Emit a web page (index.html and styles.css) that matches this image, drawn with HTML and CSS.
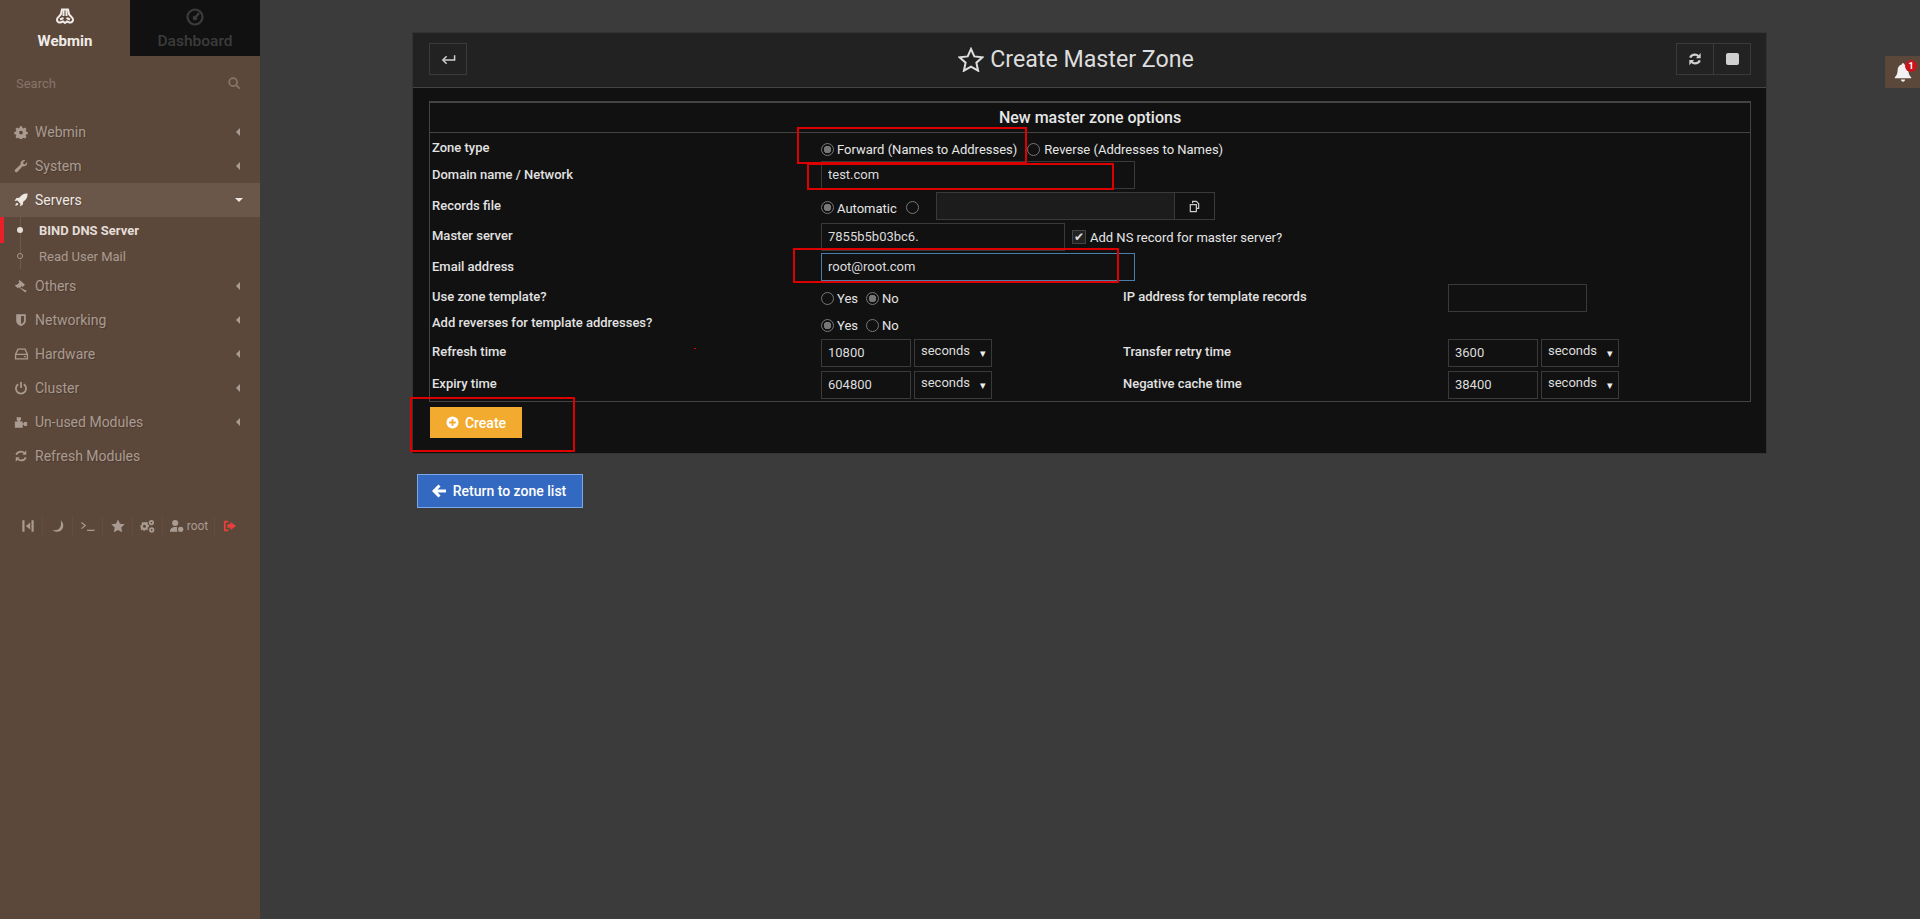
FILE: index.html
```html
<!DOCTYPE html>
<html lang="en">
<head>
<meta charset="utf-8">
<title>Create Master Zone</title>
<link rel="stylesheet" href="styles.css">
</head>
<body>
<aside class="sidebar">
  <div class="tabs">
    <div class="tab tab-active">
      <svg class="tab-icon" viewBox="0 0 20 20" fill="none" stroke="currentColor" stroke-width="2"><path d="M7 2.500h6l1.200 5 3.300 3.500c1.500 2.500-.5 5-3 4.500l-2.500-1-2 1.500-2-1.500-2.500 1c-2.500.5-4.500-2-3-4.500l3.300-3.500z"/><path d="M8.500 3v6M11.500 3v6M5 12.500l3.500-1.500M15 12.500l-3.500-1.500"/></svg>
      <span>Webmin</span>
    </div>
    <div class="tab tab-dark">
      <svg class="tab-icon" viewBox="0 0 20 20" fill="none" stroke="currentColor" stroke-width="2.200"><circle cx="10" cy="10" r="7.500"/><path d="M10 11l4-5"/><circle cx="10" cy="11" r="1.200"/></svg>
      <span>Dashboard</span>
    </div>
  </div>
  <div class="search"><span>Search</span>
    <svg class="ic" viewBox="0 0 16 16" fill="none" stroke="currentColor" stroke-width="2"><circle cx="7" cy="7" r="4.500"/><path d="M10.500 10.500l4 4"/></svg>
  </div>
  <nav class="nav">
    <div class="item"><svg class="ic" viewBox="0 0 16 16" fill="currentColor"><path fill-rule="evenodd" d="M6.700 1.500h2.600l.4 1.900 1.200.5 1.600-1 1.800 1.800-1 1.600.5 1.200 1.900.4v2.600l-1.900.4-.5 1.200 1 1.600-1.800 1.800-1.600-1-1.200.5-.4 1.900H6.700l-.4-1.900-1.200-.5-1.600 1-1.800-1.800 1-1.600-.5-1.200-1.900-.4V7.900l1.900-.4.500-1.200-1-1.600 1.800-1.800 1.600 1 1.200-.5zM8 6.500a2.200 2.200 0 100 4.400 2.200 2.200 0 000-4.400z"/></svg><span class="lbl">Webmin</span><i class="caret"></i></div>
    <div class="item"><svg class="ic" viewBox="0 0 16 16" fill="currentColor"><path d="M15 3.500c.6 2.500-1 5-4 5-.5 0-.9-.1-1.200-.2L4 14.500c-.8.800-2 .8-2.700.1-.7-.8-.6-1.900.1-2.600L7.500 6.200C7 3.200 9.800.5 13 1.200L10.300 4l.5 1.800 1.700.4z"/></svg><span class="lbl">System</span><i class="caret"></i></div>
    <div class="item item-open"><svg class="ic" viewBox="0 0 16 16" fill="currentColor"><path d="M15.500.5c.3 4.500-2 7.500-5 9.500l-.3 3.200L7 15.500l.3-3.300-3.500-3.500L.5 9l2.300-3.200L6 5.500C8 2.500 11 .2 15.500.5zM3.500 11c-1.200.5-2 2-2 3.500 1.500 0 3-.8 3.500-2z"/></svg><span class="lbl">Servers</span><i class="caret caret-down"></i></div>
    <div class="subnav">
      <div class="sub sub-active"><i class="dot"></i><span>BIND DNS Server</span></div>
      <div class="sub"><i class="dot dot-o"></i><span>Read User Mail</span></div>
    </div>
    <div class="item"><svg class="ic" viewBox="0 0 16 16" fill="currentColor"><path d="M6.500 1l6 5.500-2.500 2.700-1.200-1.100L7 10l7.500 3.500-1.500 2L5.500 9.500l-1.300 1.200L1 7.500l1.500-1.300.8.600L6.200 4l-.9-1.200z"/></svg><span class="lbl">Others</span><i class="caret"></i></div>
    <div class="item"><svg class="ic" viewBox="0 0 16 16" fill="currentColor"><path fill-rule="evenodd" d="M2.500 1.500h11v7c0 3.500-3 5.500-5.500 6.500-2.500-1-5.500-3-5.500-6.500zM8 3.500v9.200c1.800-.9 3.500-2.300 3.500-4.200v-5z"/></svg><span class="lbl">Networking</span><i class="caret"></i></div>
    <div class="item"><svg class="ic ic-wide" viewBox="0 0 16 16" fill="none" stroke="currentColor" stroke-width="1.500"><path d="M4 2.500h8l2.800 6v5H1.200v-5zM1.200 8.500h13.600"/><path d="M11 11h2" stroke-width="1.200"/></svg><span class="lbl">Hardware</span><i class="caret"></i></div>
    <div class="item"><svg class="ic" viewBox="0 0 16 16" fill="none" stroke="currentColor" stroke-width="2"><path d="M4.800 3.800a5.800 5.800 0 106.400 0"/><path d="M8 1v7"/></svg><span class="lbl">Cluster</span><i class="caret"></i></div>
    <div class="item"><svg class="ic" viewBox="0 0 16 16" fill="currentColor"><path d="M1 7.500h3V6H3V2.500h5V6H7v1.500h3V9.500h1.500v-1.500h3.500v4.500h-3.500V11H10v3.500H1z"/></svg><span class="lbl">Un-used Modules</span><i class="caret"></i></div>
    <div class="item"><svg class="ic" viewBox="0 0 16 16" fill="none" stroke="currentColor" stroke-width="2"><path d="M2.500 6.500C3.500 4 5.500 3 8 3c1.800 0 3 .8 4 1.800"/><path d="M13.500 9.500C12.500 12 10.500 13 8 13c-1.800 0-3-.8-4-1.800"/><path d="M14 1.500v5H9.500z" fill="currentColor" stroke="none"/><path d="M2 14.500v-5h4.500z" fill="currentColor" stroke="none"/></svg><span class="lbl">Refresh Modules</span></div>
  </nav>
  <div class="foot">
    <span class="fc"><svg class="fi" viewBox="0 0 16 16" fill="currentColor"><path d="M1.500 1.500h2.500v13H1.500zM12 1.500h2.500v13H12zM10.500 4v8L5.500 8z"/></svg></span>
    <span class="fc"><svg class="fi" viewBox="0 0 16 16" fill="currentColor"><path d="M11 1.500c3.500 3 4 7.500 1.500 10.500S5 15.500 1.500 12.500c4 1 7.500 0 9-3 1.200-2.500 1.200-5.500.5-8z"/></svg></span>
    <span class="fc"><svg class="fi fi-w" viewBox="0 0 16 16" fill="none" stroke="currentColor" stroke-width="1.300"><path d="M1 4l4.500 3.500L1 11M7.500 13h8.500"/></svg></span>
    <span class="fc"><svg class="fi" viewBox="0 0 16 16" fill="currentColor"><path d="M8 .5l2.300 5 5.400.6-4 3.700 1.100 5.400L8 12.500l-4.800 2.700 1.100-5.400-4-3.700 5.400-.6z"/></svg></span>
    <span class="fc"><svg class="fi fi-w" viewBox="0 0 16 16" fill="currentColor"><path fill-rule="evenodd" d="M5 3.500l1.300.4.900-.9 1.500 1.500-.7 1 .4 1.100 1.300.3v2.200l-1.300.3-.4 1.100.7 1-1.500 1.500-.9-.9-1.300.4-.3 1.300H3.500l-.3-1.300-1.100-.4-1 .7L0 11.800l.7-1-.4-1.100L0 9.400V7.200l1.300-.3.400-1.100-.7-1L2.500 3.300l1 .7 1.100-.4zM4.500 6.500a1.800 1.800 0 100 3.600 1.800 1.800 0 000-3.600z"/><path fill-rule="evenodd" d="M12.500 1a3 3 0 110 6 3 3 0 010-6zm0 2a1 1 0 100 2 1 1 0 000-2zM12.800 9.500a3 3 0 110 6 3 3 0 010-6zm0 2a1 1 0 100 2 1 1 0 000-2z"/></svg></span>
    <span class="fc fc-user"><svg class="fi fi-w" viewBox="0 0 16 16" fill="currentColor"><circle cx="6.500" cy="4.500" r="3.500"/><path d="M0.500 14.500c0-3.500 2.500-5.500 6-5.500 1 0 1.800.1 2.500.4-.8 1.500-.6 3.500.3 5.100z"/><circle cx="12.800" cy="11.800" r="3"/></svg><span>root</span></span>
    <span class="fc fc-last"><svg class="fi fi-red" viewBox="0 0 16 16" fill="currentColor"><path d="M1 3.500C1 2.500 1.800 2 2.500 2H6v2H3v8h3v2H2.500C1.800 14 1 13.500 1 12.500zM8.500 3.500L15 8l-6.500 4.500V10H5V6h3.500z"/></svg></span>
  </div>
</aside>

<main class="main">
  <section class="panel">
    <header class="panel-head">
      <button class="btn-sq" type="button"><svg class="hd-ic hd-back" viewBox="0 0 16 16" fill="none" stroke="currentColor" stroke-width="1.600"><path d="M14.500 3.500v5H2.500"/><path d="M6 4.500L2 8.500l4 4"/></svg></button>
      <h1 class="title"><svg class="star" viewBox="0 0 26 25" fill="none" stroke="currentColor" stroke-width="2"><path d="M13 2l3.300 7.400 8.200.9-6.100 5.400 1.700 8L13 19.600l-7.100 4.100 1.700-8L1.500 10.300l8.200-.9z"/></svg>Create Master Zone</h1>
      <div class="btn-group">
        <button class="btn-sq" type="button"><svg class="hd-ic" viewBox="0 0 16 16" fill="none" stroke="currentColor" stroke-width="2.600"><path d="M2.500 6.500C3.500 4 5.500 3 8 3c1.800 0 3 .8 4 1.800"/><path d="M13.500 9.500C12.500 12 10.500 13 8 13c-1.800 0-3-.8-4-1.800"/><path d="M14.500 1v6H9z" fill="currentColor" stroke="none"/><path d="M1.500 15V9H7z" fill="currentColor" stroke="none"/></svg></button>
        <button class="btn-sq" type="button"><span class="stop"></span></button>
      </div>
    </header>
    <div class="panel-body">
      <div class="opts">
        <div class="opts-title">New master zone options</div>
        <div class="row h28">
          <label class="k k7">Zone type</label>
          <div class="v v-wide radios pad9"><input type="radio" name="zt" checked><span class="opt-a">Forward (Names to Addresses)</span><input type="radio" name="zt"><span class="opt-r">Reverse (Addresses to Names)</span></div>
        </div>
        <div class="row h31">
          <label class="k">Domain name / Network</label>
          <div class="v v-wide"><input class="inp w314" value="test.com"></div>
        </div>
        <div class="row h31">
          <label class="k">Records file</label>
          <div class="v v-wide radios rec"><input type="radio" name="rf" checked><span class="opt-b">Automatic</span><input type="radio" name="rf">
            <span class="file"><input class="inp file-inp"><span class="file-btn"><svg class="copy" viewBox="0 0 14 14" fill="none" stroke="currentColor" stroke-width="1.300"><path d="M5 3.500V1.500h4l2.500 2.500v5H9"/><rect x="2.500" y="5" width="6.500" height="7.500"/></svg></span></span>
          </div>
        </div>
        <div class="row h30">
          <label class="k k5">Master server</label>
          <div class="v v-wide chk-row"><input class="inp w244" value="7855b5b03bc6."><span class="chk">&#10004;</span><span class="chk-l">Add NS record for master server?</span></div>
        </div>
        <div class="row h30">
          <label class="k">Email address</label>
          <div class="v v-wide"><input class="inp w314 focus" value="root@root.com"></div>
        </div>
        <div class="row h29">
          <label class="k">Use zone template?</label>
          <div class="v radios tiny pad8"><input type="radio" name="ut"><span class="opt-y">Yes</span><input type="radio" name="ut" checked><span>No</span></div>
          <label class="k2">IP address for template records</label>
          <div class="v push"><input class="inp w139"></div>
        </div>
        <div class="row h26">
          <label class="k k3">Add reverses for template addresses?</label>
          <div class="v radios tiny pad6"><input type="radio" name="ar" checked><span class="opt-y">Yes</span><input type="radio" name="ar"><span>No</span></div>
        </div>
        <div class="row h32">
          <label class="k">Refresh time</label>
          <div class="v pair push"><input class="inp w90" value="10800"><div class="sel"><span>seconds</span><i>&#9662;</i></div></div>
          <label class="k2">Transfer retry time</label>
          <div class="v pair push"><input class="inp w90" value="3600"><div class="sel"><span>seconds</span><i>&#9662;</i></div></div>
        </div>
        <div class="row h31">
          <label class="k">Expiry time</label>
          <div class="v pair push"><input class="inp w90" value="604800"><div class="sel"><span>seconds</span><i>&#9662;</i></div></div>
          <label class="k2">Negative cache time</label>
          <div class="v pair push"><input class="inp w90" value="38400"><div class="sel"><span>seconds</span><i>&#9662;</i></div></div>
        </div>
      </div>
      <button class="btn-create" type="button"><svg class="bi" viewBox="0 0 14 14"><circle cx="7" cy="7" r="6.500" fill="currentColor"/><path d="M7 3.500v7M3.500 7h7" stroke="#f3ab2f" stroke-width="2"/></svg>Create</button>
    </div>
  </section>
  <button class="btn-return" type="button"><svg class="bi bi-l" viewBox="0 0 14 14" fill="none" stroke="currentColor" stroke-width="3"><path d="M7.500 1.500L2 7l5.500 5.500M2.500 7H14"/></svg>Return to zone list</button>
</main>

<div class="bell"><svg viewBox="0 0 16 16" fill="currentColor"><path d="M8 1c.6 0 1 .4 1 .9 2.300.5 3.300 2.500 3.300 4.600 0 3 1.200 4.700 2.200 5.500v1H1.500v-1c1-.8 2.200-2.500 2.200-5.500 0-2.100 1-4.100 3.300-4.600 0-.5.400-.9 1-.9z"/><path d="M6.300 14h3.400c0 1-.8 1.700-1.700 1.700S6.300 15 6.300 14z"/></svg><b>1</b></div>

<div class="mark m1"></div>
<div class="mark m2"></div>
<div class="mark m3"></div>
<div class="mark m4"></div>
<div class="speck"></div>
</body>
</html>
```
FILE: styles.css
```css
* { box-sizing: border-box; }
html, body { height: 100%; }
body {
  margin: 0;
  background: #3b3b3b;
  font-family: Roboto, "Liberation Sans", sans-serif;
  font-size: 13px;
  color: #e6e6e6;
  display: flex;
  overflow: hidden;
  position: relative;
}

/* sidebar */
.sidebar { width: 260px; flex: none; background: #5c483b; color: #a99b91; position: relative; }
.tabs { display: flex; height: 56px; }
.tab { width: 130px; display: flex; flex-direction: column; align-items: center; padding-top: 7px; font-size: 15px; font-weight: 500; }
.tab-active { color: #f0ebe7; font-weight: 700; }
.tab-dark { background: #111; color: #3c3c3c; font-size: 15.5px; }
.tab-icon { width: 20px; height: 20px; margin-bottom: 5px; }
.search { display: flex; justify-content: space-between; align-items: center; height: 30px; margin-top: 12px; padding: 0 19px 0 16px; font-size: 13px; color: #85756a; }
.search .ic { margin: 0; color: #85756a; }
.nav { margin-top: 17px; }
.item { height: 34px; display: flex; align-items: center; padding-left: 14px; padding-right: 20px; font-size: 14px; text-shadow: 1px 1px 1px rgba(0,0,0,.2); }
.ic { width: 14px; height: 14px; flex: none; margin-right: 7px; }
.ic-wide { width: 15px; margin-right: 6px; }
.lbl { flex: 1; }
.caret { width: 0; height: 0; border: 4px solid transparent; border-left: 0; border-right: 4px solid #a99b91; }
.item-open { background: #6b5749; color: #eee8e3; }
.caret-down { border: 4px solid transparent; border-bottom: 0; border-top: 4px solid #eee8e3; margin-right: -3px; }
.subnav { position: relative; }
.subnav::before { content: ""; position: absolute; left: 20px; top: 0; bottom: 0; width: 1px; background: #6d5a4d; }
.sub { height: 26px; display: flex; align-items: center; padding-left: 39px; font-size: 13px; position: relative; }
.sub-active { font-weight: 700; color: #e4ddd7; }
.sub-active::before { content: ""; position: absolute; left: 0; top: 0; width: 4px; height: 26px; background: #e8202a; }
.dot { position: absolute; left: 17px; top: 10px; width: 6px; height: 6px; border-radius: 50%; background: #e4ddd7; }
.dot-o { background: #5c483b; border: 1px solid #a99b91; }
.foot { position: absolute; top: 516px; left: 13px; display: flex; height: 20px; font-size: 12px; }
.fc { width: 30px; height: 20px; display: flex; align-items: center; justify-content: center; border-right: 1px solid rgba(255,255,255,.03); }
.fc-user { width: 52px; gap: 3px; }
.fc-last { border-right: 0; }
.fi { width: 14px; height: 14px; flex: none; }
.fi-w { width: 15px; }
.fi-red { color: #e8403a; }

/* main */
.main { flex: 1; padding: 33px 0 0 153px; }
.panel { width: 1353px; background: #111; box-shadow: 0 0 0 1px #333; }
.panel-head { height: 55px; background: #222; border-bottom: 1px solid #444; padding: 10px 15px 0 16px; display: flex; justify-content: space-between; align-items: flex-start; position: relative; }
.btn-sq { width: 38px; height: 32px; background: #222; border: 1px solid #3a3a3a; color: #d0d0d0; padding: 0; display: flex; align-items: center; justify-content: center; }
.hd-ic { width: 14px; height: 14px; }
.hd-back { width: 15px; height: 15px; }
.title { position: absolute; left: 0; right: 0; top: 10px; margin: 0; display: flex; justify-content: center; align-items: center; gap: 6px; height: 32px; font-size: 23.2px; font-weight: 400; color: #ddd; padding-right: 27px; }
.star { width: 26px; height: 25px; }
.btn-group { display: flex; }
.btn-group .btn-sq + .btn-sq { margin-left: -1px; }
.stop { width: 13px; height: 12px; background: #d0d0d0; border-radius: 2px; }
.panel-body { padding: 13px 15px 15px 16px; }
.opts { border: 1px solid #444; border-top-width: 2px; }
.opts-title { height: 30px; line-height: 29px; text-align: center; font-size: 16px; font-weight: 500; color: #e6e6e6; border-bottom: 1px solid #444; }
.row { display: grid; grid-template-columns: 391px 302px 325px 1fr; align-items: start; }
.h28 { height: 28px; } .h31 { height: 31px; } .h30 { height: 30px; } .h29 { height: 29px; } .h26 { height: 26px; } .h32 { height: 32px; }
.k, .k2 { font-weight: 500; padding-left: 2px; padding-top: 6px; color: #e2e2e2; }
.k2 { padding-left: 0; }
.k7 { padding-top: 7px; }
.k5 { padding-top: 5px; }
.k3 { padding-top: 3px; }
.v { display: flex; align-items: center; min-width: 0; }
.v-wide { grid-column: 2 / 5; }
.push { margin-top: 1px; }
.pad9 { padding-top: 9px; }
.pad8 { padding-top: 8px; }
.pad6 { padding-top: 6px; }
.radios input[type="radio"] { appearance: none; -webkit-appearance: none; width: 13px; height: 13px; margin: 0 3px 0 0; border: 1px solid #777; border-radius: 50%; background: #111; flex: none; }
.radios input[type="radio"]:checked { background: radial-gradient(circle, #777 0 3.5px, #111 4px); }
.rec { align-items: flex-start; }
.rec input[type="radio"], .rec > span:not(.file) { margin-top: 9px; }
.opt-a { margin-right: 10px; }
.opt-r { margin-left: 1px; }
.opt-b { margin-right: 9px; }
.opt-y { margin-right: 8px; }
.inp { height: 28px; border: 1px solid #3a3a3a; background: #111; color: #ddd; font: 13px Roboto, "Liberation Sans", sans-serif; padding: 0 6px 2px; outline: 0; }
.w314 { width: 314px; } .w244 { width: 244px; } .w139 { width: 139px; } .w90 { width: 90px; }
.focus { border-color: #4a7ea8; }
.file { display: flex; margin-left: 14px; margin-top: 0; }
.file-inp { width: 239px; background: #1c1c1c; }
.file-btn { width: 40px; height: 28px; border: 1px solid #3a3a3a; border-left: 0; display: flex; align-items: center; justify-content: center; color: #ccc; }
.copy { width: 13px; height: 13px; }
.chk-row .chk { width: 14px; height: 14px; margin: 0 4px 0 7px; border: 1px solid #444; background: #222; color: #ddd; font-size: 12px; line-height: 12px; text-align: center; }
.pair { gap: 3px; }
.sel { width: 78px; height: 28px; border: 1px solid #3a3a3a; background: #111; padding: 0 5px 5px 6px; display: flex; justify-content: space-between; align-items: center; color: #ddd; }
.sel i { font-style: normal; font-size: 11px; margin-top: 6px; color: #eee; }
.btn-create { margin: 5px 0 0 1px; height: 31px; width: 92px; background: #f3ab2f; border: 1px solid #f3ab2f; color: #fff; font: 500 14px Roboto, "Liberation Sans", sans-serif; display: flex; align-items: center; justify-content: center; gap: 6px; padding: 0; }
.bi { width: 13px; height: 13px; }
.bi-l { width: 14px; height: 14px; }
.btn-return { margin: 21px 0 0 4px; width: 166px; height: 34px; background: #3369c0; border: 1px solid #7aa8e8; color: #fff; font: 500 14px Roboto, "Liberation Sans", sans-serif; display: flex; align-items: center; justify-content: center; gap: 7px; padding: 0 2px 0 0; }

/* overlays */
.bell { position: absolute; left: 1885px; top: 56px; width: 35px; height: 32px; background: #5c483b; color: #f2f2f2; display: flex; align-items: center; padding-left: 8px; }
.bell svg { width: 20px; height: 20px; }
.bell b { position: absolute; left: 20px; top: 4px; width: 12px; height: 12px; border-radius: 50%; background: #c8161c; color: #fff; font-size: 9px; line-height: 12px; text-align: center; }
.mark { position: absolute; border: 2px solid #dd0000; }
.m1 { left: 797px; top: 127px; width: 230px; height: 37px; }
.m2 { left: 807px; top: 163px; width: 307px; height: 27px; }
.m3 { left: 793px; top: 248px; width: 326px; height: 35px; }
.m4 { left: 410px; top: 397px; width: 165px; height: 55px; }
.speck { position: absolute; left: 694px; top: 348px; width: 2px; height: 1px; background: #dd0000; }
```
